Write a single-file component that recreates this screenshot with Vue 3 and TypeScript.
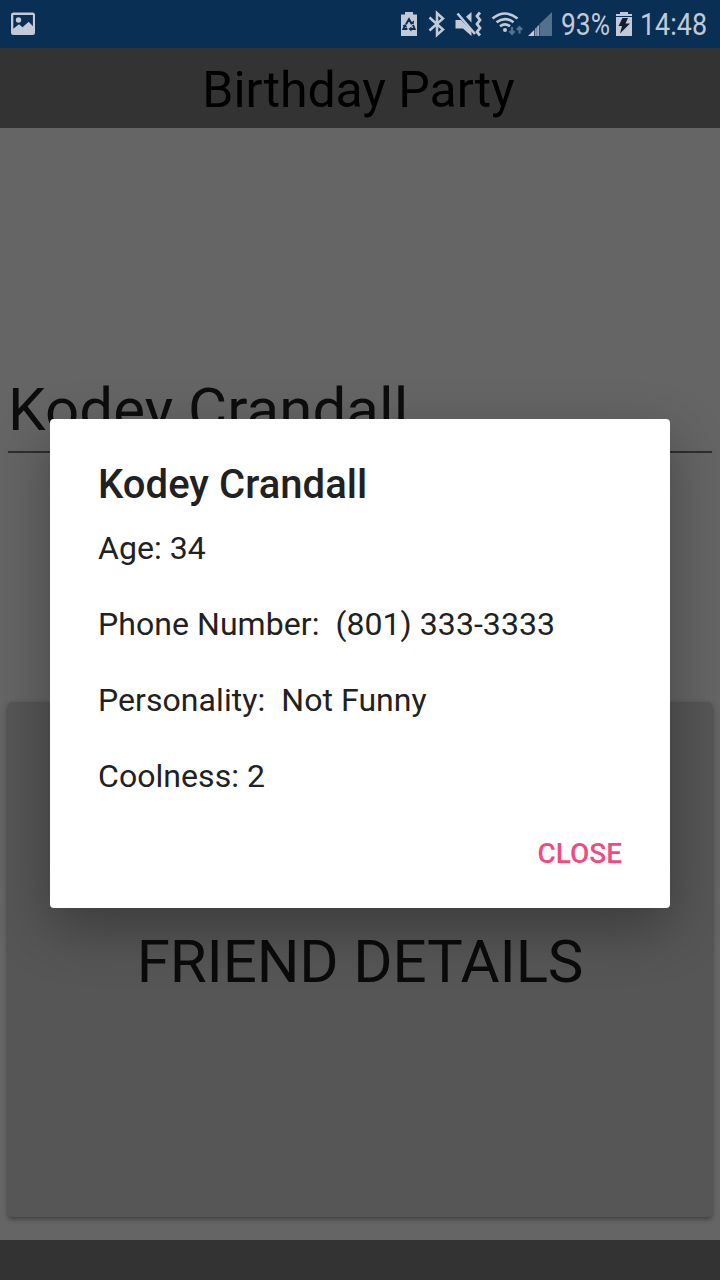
<script setup lang="ts">
interface Friend {
  name: string
  details: string[]
}

const friend: Friend = {
  name: 'Kodey Crandall',
  details: ['Age: 34', 'Phone Number:  (801) 333-3333', 'Personality:  Not Funny', 'Coolness: 2'],
}
</script>

<template>
  <div class="screen">
    <header class="status">
      <svg class="status-icons" width="720" height="48" viewBox="0 0 720 48">
        <g fill="#c1cad6">
          <path fill-rule="evenodd" d="M13.500 12.500h19a2.500 2.500 0 0 1 2.500 2.500v17.500a2.500 2.500 0 0 1-2.500 2.500h-19a2.500 2.500 0 0 1-2.500-2.500V15a2.500 2.500 0 0 1 2.500-2.500zM13.300 15v13.700l5.700-4.400 3.500 3 6.200-5.500 4.200 4.400V15z" />
          <circle cx="18.500" cy="20" r="2.700" />
          <path d="M401 14.500h4V12h8v2.500h4V36h-16z" />
          <path d="M616 17h16v19h-16z" />
          <path d="M616 16v-2h4v-2h8v2h4v2z" />
          <path d="M455.500 20h5.500l10.500 10.500V36l-8.500-7.500h-7.500z" />
          <path d="M466 16.800l5.500-4.800v10.500z" />
          <circle cx="505" cy="30" r="2" />
          <path d="M528 36l6.300-6.300V36zM535.300 36v-7.500l1.300-1.300V36zM537.300 36v-9.500l1.500-1.500V36z" />
        </g>
        <path d="M406 24.200l3-5 3 5M413 25l1.600 4h-4M407.400 29h-4l1.700-4" fill="none" stroke="#0a2f54" stroke-width="2" />
        <path d="M410 23.300l3.700 1 .3-3.800zM411.500 26.500l-3 2.500 3 2.500zM402.500 25.500l3.500-1.200 1 3.700z" fill="#0a2f54" />
        <path d="M429.500 17.500l13.500 12-6 5.500V13l6 5.500-13.500 12" fill="none" stroke="#c1cad6" stroke-width="2.500" />
        <path d="M459.500 13.200l15.500 18.500" fill="none" stroke="#0a2f54" stroke-width="1.500" />
        <path d="M457.500 13.500l17.500 20.500" fill="none" stroke="#c1cad6" stroke-width="2.600" />
        <path d="M480 12.500l-3 3.500 3 4-3 4 3 4-3 4 3 3.500" fill="none" stroke="#c1cad6" stroke-width="2.800" />
        <g fill="none" stroke="#c1cad6" stroke-width="2.600">
          <path d="M492.500 18.500q12.500-10 25 0M496.500 22.300q8.500-6.500 17 0M500 26.300q5-4 10 0" />
        </g>
        <path d="M539.500 24L552 12v24h-12.500z" fill="#53708c" />
        <path d="M512 27v6.500M509.300 31l2.700 2.800 2.700-2.800M519.500 33.500V27M516.800 29.800l2.700-2.800 2.700 2.800" fill="none" stroke="#53708c" stroke-width="2.200" />
        <path d="M622.500 18h5.500l-2.500 5.500h4.500L620 33.500l2-7.500h-3.500z" fill="#131f2c" />
        <g class="status-text">
          <text x="561" y="35" textLength="49" lengthAdjust="spacingAndGlyphs">93%</text>
          <text x="640" y="35" textLength="67" lengthAdjust="spacingAndGlyphs">14:48</text>
        </g>
      </svg>
    </header>

    <h1 class="title-bar">Birthday Party</h1>

    <main class="content">
      <div class="spinner">{{ friend.name }}</div>
      <button class="details-button" type="button">FRIEND DETAILS</button>
    </main>

    <footer class="footer" />

    <section class="dialog" role="dialog" aria-labelledby="dialog-title">
      <h2 id="dialog-title" class="dialog-title">{{ friend.name }}</h2>
      <p v-for="line in friend.details" :key="line" class="detail">{{ line }}</p>
      <button class="close" type="button">CLOSE</button>
    </section>
  </div>
</template>

<style>
body {
  margin: 0;
  overflow: hidden;
}
</style>

<style scoped>
.screen {
  position: relative;
  display: flex;
  flex-direction: column;
  width: 720px;
  height: 1280px;
  overflow: hidden;
  background: #656565;
  font-family: Roboto, sans-serif;
}

.status {
  height: 48px;
  background: #0a2f54;
}

.status-icons {
  display: block;
}

.status-text {
  font-size: 30.500px;
  fill: #c1cad6;
}

.title-bar {
  margin: 0;
  height: 80px;
  box-sizing: border-box;
  padding: 2px 3px 0 0;
  background: #333;
  color: #000;
  font-size: 50px;
  font-weight: 400;
  letter-spacing: -0.060px;
  line-height: 80px;
  text-align: center;
}

.content {
  display: flex;
  flex: 1;
  flex-direction: column;
  padding: 247px 8px 23px;
}

.spinner {
  height: 76px;
  border-bottom: 2px solid #2e2e2e;
  color: #0d0d0d;
  font-size: 60px;
  letter-spacing: 0.080px;
  line-height: 70px;
}

.details-button {
  margin: 249px 0 0;
  padding: 4px 0 0;
  flex: 1;
  border: 0;
  border-radius: 4px;
  background: #565656;
  box-shadow: 0 2px 5px rgba(0, 0, 0, 0.4);
  color: #0b0b0b;
  font: 400 60px/70px Roboto, sans-serif;
  letter-spacing: -0.140px;
}

.footer {
  height: 40px;
  background: #333;
}

.dialog {
  position: absolute;
  top: 419px;
  left: 50px;
  display: flex;
  flex-direction: column;
  box-sizing: border-box;
  width: 620px;
  height: 489px;
  padding: 42px 48px 0;
  border-radius: 4px;
  background: #fff;
  box-shadow: 0 20px 56px rgba(0, 0, 0, 0.32);
  color: #212121;
}

.dialog-title {
  margin: 0 0 20px;
  font-size: 40px;
  font-weight: 500;
  letter-spacing: 0.050px;
  line-height: 48px;
}

.detail {
  margin: 0 0 38px;
  font-size: 32px;
  letter-spacing: 0.060px;
  line-height: 38px;
  white-space: pre;
}

.close {
  align-self: flex-end;
  margin: 3px 0 0;
  padding: 0;
  border: 0;
  background: none;
  color: #ef4b82;
  font: 500 28px/36px Roboto, sans-serif;
}
</style>
